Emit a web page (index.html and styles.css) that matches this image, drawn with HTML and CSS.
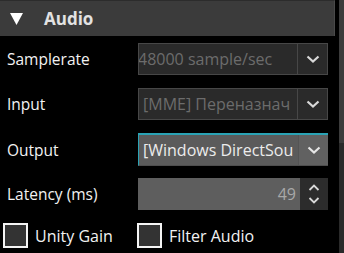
FILE: index.html
```html
<!DOCTYPE html>
<html lang="en">
<head>
    <meta charset="UTF-8">
    <title>Audio</title>
    <link rel="stylesheet" href="styles.css">
</head>
<body>
    <div class="window">
        <div class="panel">
            <div class="section-header">
                <svg class="arrow" width="13" height="12" viewBox="0 0 13 12"><polygon points="0,0 13,0 6.5,12" fill="#fff"/></svg>
                <span class="title">Audio</span>
            </div>

            <div class="rows">
                <div class="row">
                    <label>Samplerate</label>
                    <div class="combo disabled">
                        <span class="value shift">48000 sample/sec</span>
                        <span class="drop">
                            <svg width="14" height="8" viewBox="0 0 14 8"><polyline points="1.5,1.5 7,6.5 12.5,1.5" fill="none" stroke="#d8d8d8" stroke-width="2.2"/></svg>
                        </span>
                    </div>
                </div>

                <div class="row">
                    <label>Input</label>
                    <div class="combo disabled">
                        <span class="value">[MME] Переназнач</span>
                        <span class="drop">
                            <svg width="14" height="8" viewBox="0 0 14 8"><polyline points="1.5,1.5 7,6.5 12.5,1.5" fill="none" stroke="#d8d8d8" stroke-width="2.2"/></svg>
                        </span>
                    </div>
                </div>

                <div class="row">
                    <label>Output</label>
                    <div class="combo active">
                        <span class="value">[Windows DirectSou</span>
                        <span class="drop">
                            <svg width="14" height="8" viewBox="0 0 14 8"><polyline points="1.5,1.5 7,6.5 12.5,1.5" fill="none" stroke="#e6e6e6" stroke-width="2.2"/></svg>
                        </span>
                    </div>
                </div>

                <div class="row">
                    <label>Latency (ms)</label>
                    <div class="spin">
                        <span class="number">49</span>
                        <span class="spin-buttons">
                            <svg width="12" height="7" viewBox="0 0 12 7"><polyline points="1.5,6 6,1.5 10.5,6" fill="none" stroke="#d8d8d8" stroke-width="1.8"/></svg>
                            <svg width="12" height="7" viewBox="0 0 12 7"><polyline points="1.5,1 6,5.5 10.5,1" fill="none" stroke="#d8d8d8" stroke-width="1.8"/></svg>
                        </span>
                    </div>
                </div>

                <div class="checks">
                    <div class="check"><span class="box"></span>Unity Gain</div>
                    <div class="check"><span class="box"></span>Filter Audio</div>
                </div>
            </div>
        </div>
        <div class="scrollbar">
            <div class="thumb"></div>
        </div>
    </div>
</body>
</html>
```

FILE: styles.css
```css
* {
    margin: 0;
    padding: 0;
    box-sizing: border-box;
}

body {
    font-family: 'Open Sans', 'Noto Sans', sans-serif;
    background-color: #000;
    color: #f0f0f0;
    width: 344px;
    height: 253px;
    overflow: hidden;
}

.window {
    display: flex;
    height: 253px;
}

.panel {
    width: 335px;
}

.section-header {
    height: 36px;
    background-color: #3b3b3b;
    border-top: 1px solid #2c2c2c;
    border-right: 1px solid #4a4a4a;
    display: flex;
    align-items: center;
    padding-left: 10px;
}

.section-header .arrow {
    margin-right: 21px;
}

.section-header .title {
    font-size: 17px;
    font-weight: 700;
    color: #e2e2e2;
}

.rows {
    display: flex;
    flex-direction: column;
    gap: 13px;
    padding-top: 7px;
}

.row {
    display: grid;
    grid-template-columns: 138px 190px;
    height: 32px;
    align-items: center;
}

.row label {
    font-size: 15.5px;
    padding-left: 7px;
    color: #f2f2f2;
}

/* drop-down boxes */
.combo {
    height: 32px;
    display: flex;
    border: 1px solid #474747;
    background-color: #2a2a2a;
    overflow: hidden;
}

.combo .value {
    flex: 1;
    white-space: nowrap;
    overflow: hidden;
    font-size: 16px;
    line-height: 30px;
    padding-left: 4px;
    color: #6c6c6c;
}

.combo .value.shift {
    padding-left: 0;
    text-indent: -1px;
}

.combo .drop {
    width: 30px;
    flex: none;
    border-left: 1px solid #474747;
    display: flex;
    align-items: center;
    justify-content: center;
}

.combo.active {
    background-color: #5b5b5b;
    border: none;
    border-top: 2px solid #2aa3b5;
    border-left: 1px solid #2aa3b5;
    border-bottom: 1px solid #4e4e4e;
    height: 33px;
}

.combo.active .value {
    color: #ececec;
    line-height: 30px;
    padding-left: 4px;
}

.combo.active .drop {
    background-color: #616161;
    border-left: 1px solid #545454;
}

/* number box */
.spin {
    height: 32px;
    display: flex;
    background-color: #5e5e5e;
}

.spin .number {
    flex: 1;
    text-align: right;
    font-size: 16px;
    line-height: 32px;
    padding-right: 4px;
    color: #a8a8a8;
}

.spin-buttons {
    width: 28px;
    background-color: #2c2c2c;
    display: flex;
    flex-direction: column;
    align-items: center;
    justify-content: center;
    gap: 6px;
}

/* check boxes */
.checks {
    display: flex;
    height: 25px;
    align-items: center;
    padding-left: 3px;
}

.check {
    display: flex;
    align-items: center;
    font-size: 16px;
    color: #f2f2f2;
    width: 134px;
}

.check .box {
    width: 25px;
    height: 25px;
    border: 2px solid #f4f4f4;
    background-color: #333;
    margin-right: 7px;
}

.scrollbar {
    margin-left: 4px;
    width: 5px;
    background-color: #2a2a2a;
}

.scrollbar .thumb {
    height: 143px;
    background-color: #3c3c3c;
}
```
